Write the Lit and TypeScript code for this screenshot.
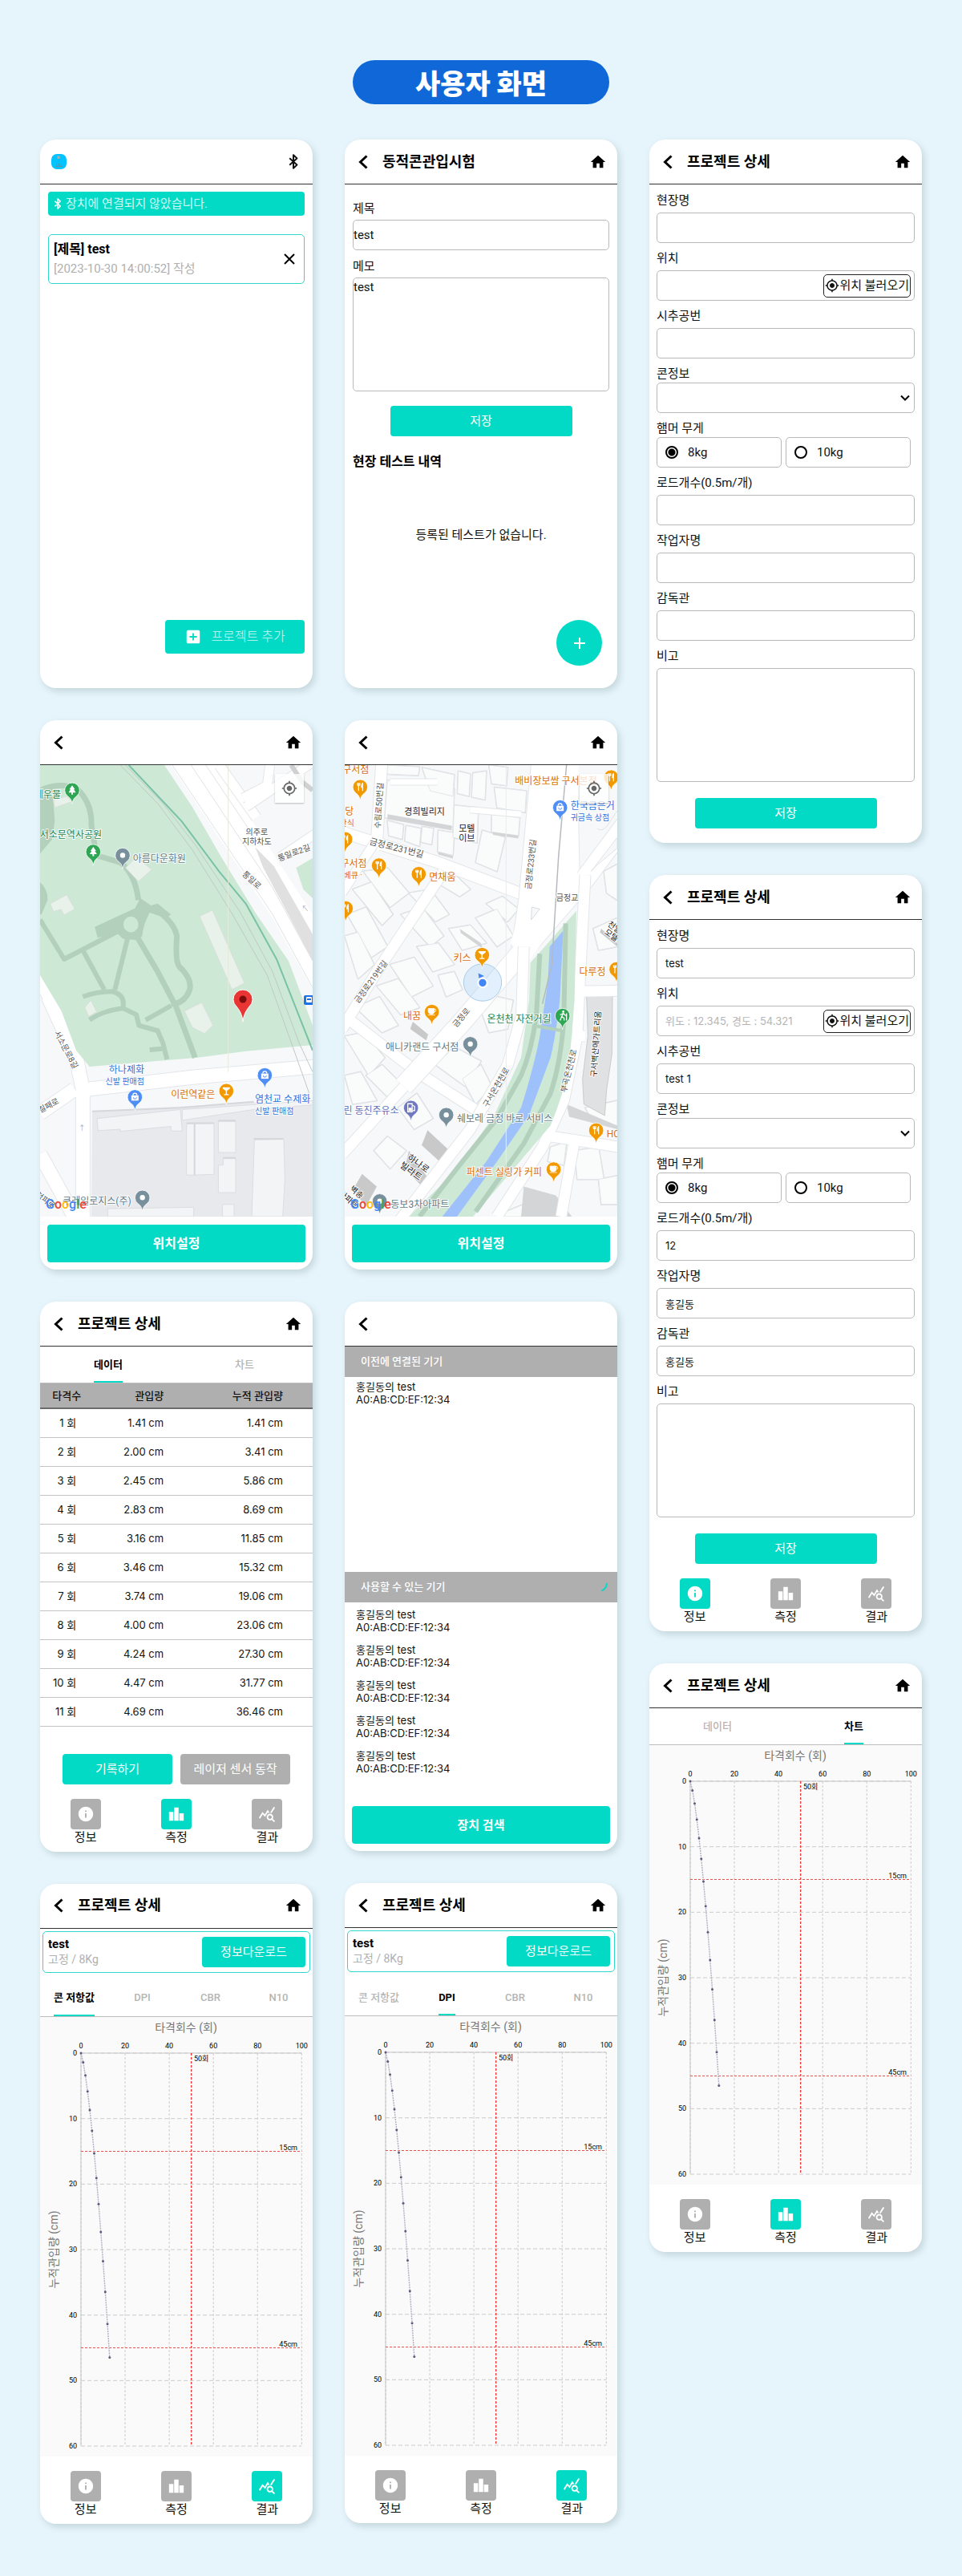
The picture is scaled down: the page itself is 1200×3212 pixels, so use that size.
import { LitElement, html, svg, css, nothing } from "lit";
import { customElement, property } from "lit/decorators.js";
import { classMap } from "lit/directives/class-map.js";

/* ---------- shared styles ---------- */

const base = css`
  :host {
    display: block;
    box-sizing: border-box;
    font-family: Roboto, "Noto Sans CJK KR", sans-serif;
    color: #111;
    font-size: 15px;
    line-height: 20px;
  }
  * { box-sizing: border-box; }
  button, input, textarea, select {
    font: inherit;
    color: inherit;
    margin: 0;
    padding: 0;
    border: 0;
    background: none;
    outline: none;
    border-radius: 0;
  }
  button { cursor: pointer; }
  svg { display: block; }
  .teal-button {
    display: flex;
    align-items: center;
    justify-content: center;
    background: #03dac6;
    color: #fff;
    border-radius: 4px;
    height: 38px;
  }
  .save { width: 227px; align-self: center; }
  .label { display: block; height: 20px; }
  .box {
    display: block;
    width: 100%;
    height: 38px;
    border: 1px solid #b9b9b9;
    border-radius: 5px;
    background: #fff;
  }
  textarea.box { height: 142px; resize: none; }
`;

/* ---------- icons ---------- */

const icon = (d: string, size: number) => html`<svg width=${size} height=${size} viewBox="0 0 24 24" fill="currentColor" aria-hidden="true"><path d=${d} /></svg>`;
const HOME = "M10 20v-6h4v6h5v-8h3L12 3 2 12h3v8z";
const LOCATE = "M12 8c-2.21 0-4 1.79-4 4s1.79 4 4 4 4-1.79 4-4-1.79-4-4-4zm8.94 3c-.46-4.17-3.77-7.48-7.94-7.94V1h-2v2.06C6.83 3.52 3.52 6.83 3.06 11H1v2h2.06c.46 4.17 3.77 7.48 7.94 7.94V23h2v-2.06c4.17-.46 7.48-3.77 7.94-7.94H23v-2h-2.06zM12 19c-3.87 0-7-3.13-7-7s3.13-7 7-7 7 3.13 7 7-3.13 7-7 7z";
const INFO = "M12 2C6.48 2 2 6.48 2 12s4.48 10 10 10 10-4.48 10-10S17.52 2 12 2zm1 15h-2v-6h2v6zm0-8h-2V7h2v2z";
const BARS = "M2 9h6v12H2zM9 3h6v18H9zM16 11h6v10h-6z";
const STATS = "M19.88 18.47c.44-.7.7-1.51.7-2.39 0-2.49-2.01-4.5-4.5-4.5s-4.5 2.01-4.5 4.5 2.01 4.5 4.49 4.5c.88 0 1.7-.26 2.39-.7L21.58 23 23 21.58l-3.12-3.11zm-3.8.11c-1.38 0-2.5-1.12-2.5-2.5s1.12-2.5 2.5-2.5 2.5 1.12 2.5 2.5-1.12 2.5-2.5 2.5zm-.36-8.5c-.74.02-1.45.18-2.1.45l-.55-.83-3.8 6.18-3.01-3.52-3.63 5.81L1 17l5-8 3 3.5L13 6c.97 1.6 1.81 2.72 2.72 4.08zm2.59.5c-.64-.28-1.33-.45-2.05-.49L21.38 2 23 3.18l-4.69 7.4z";
const ADD_BOX = "M19 3H5a2 2 0 0 0-2 2v14a2 2 0 0 0 2 2h14a2 2 0 0 0 2-2V5a2 2 0 0 0-2-2zm-2 10h-4v4h-2v-4H7v-2h4V7h2v4h4v2z";

const bluetooth = (w: number, h: number) => html`<svg width=${w} height=${h} viewBox="0 0 12 19" fill="none" stroke="currentColor" stroke-width="2" stroke-linejoin="round" aria-hidden="true">
  <path d="M1.2 5.2 10.4 13.6 6 17.8V1.2l4.4 4.2L1.2 13.8" />
</svg>`;

/* ---------- screen header ---------- */

@customElement("screen-header")
export class ScreenHeader extends LitElement {
  @property() heading = "";
  @property() end: "home" | "none" = "home";
  static styles = [base, css`
    .bar {
      display: flex;
      align-items: center;
      height: 56px;
      padding: 0 13px 0 11px;
      border-bottom: 1px solid #333;
    }
    h2 { margin: 0; padding-left: 12px; font-size: 18px; line-height: 24px; font-weight: 700; flex: 1; color: #000; }
    button { color: #000; }
  `];
  render() {
    return html`<header class="bar">
      <button aria-label="뒤로">
        <svg width="24" height="24" viewBox="0 0 24 24" fill="none" stroke="currentColor" stroke-width="3" aria-hidden="true"><path d="M16.5 4.5 8.5 12l8 7.5" /></svg>
      </button>
      <h2>${this.heading}</h2>
      ${this.end === "home" ? html`<button aria-label="홈">${icon(HOME, 22)}</button>` : nothing}
    </header>`;
  }
}

/* ---------- bottom navigation ---------- */

@customElement("bottom-nav")
export class BottomNav extends LitElement {
  @property({ type: Number }) active = 0;
  static styles = [base, css`
    nav { display: grid; grid-template-columns: repeat(3, 1fr); padding: 18px 0 7px; }
    a { display: flex; flex-direction: column; align-items: center; color: #111; text-decoration: none; line-height: 21px; }
    .tile { display: flex; align-items: center; justify-content: center; width: 38px; height: 38px; border-radius: 4px; background: #afafaf; color: #fff; }
    .on { background: #03dac6; }
  `];
  render() {
    const items: [string, string, number][] = [["정보", INFO, 22], ["측정", BARS, 22], ["결과", STATS, 22]];
    return html`<nav>${items.map(([name, d, size], i) => html`<a href="#">
      <span class=${classMap({ tile: true, on: i === this.active })}>${icon(d, size)}</span>${name}
    </a>`)}</nav>`;
  }
}

/* ---------- tabs ---------- */

@customElement("tab-row")
export class TabRow extends LitElement {
  @property({ attribute: false }) tabs: string[] = [];
  @property({ type: Number }) active = 0;
  static styles = [base, css`
    .row { display: flex; height: 46px; border-bottom: 1px solid #bdbdbd; }
    .cell { flex: 1; display: flex; justify-content: center; }
    button { font-size: 13px; font-weight: 500; color: #b5b5b5; border-bottom: 2px solid transparent; border-top: 2px solid transparent; }
    .on { color: #000; font-weight: 700; border-bottom-color: #03dac6; }
  `];
  render() {
    return html`<div class="row" role="tablist">${this.tabs.map((t, i) => html`<div class="cell">
      <button role="tab" aria-selected=${i === this.active} class=${classMap({ on: i === this.active })}>${t}</button>
    </div>`)}</div>`;
  }
}

/* ---------- penetration chart ---------- */

const DEPTHS = [0, 1.41, 3.41, 5.86, 8.69, 11.85, 15.32, 19.06, 23.06, 27.3, 31.77, 36.46, 41.36, 46.46];

@customElement("depth-chart")
export class DepthChart extends LitElement {
  static styles = [base, css`
    svg { width: 100%; height: auto; background: #fafafa; }
    .tick { font-size: 9px; fill: #000; }
    .axis { font-size: 14px; fill: #777; }
  `];
  render() {
    const X = (v: number) => 51 + v * 2.753;
    const Y = (v: number) => 45 + v * 8.167;
    const xs = [0, 20, 40, 60, 80, 100];
    const ys = [0, 10, 20, 30, 40, 50, 60];
    return html`<svg viewBox="0 0 340 548" role="img" aria-label="타격회수와 누적관입량">
      <text class="axis" x="182" y="18" text-anchor="middle">타격회수 (회)</text>
      <text class="axis" transform="translate(22 290) rotate(-90)" text-anchor="middle">누적관입량 (cm)</text>
      ${xs.map((v) => svg`<line x1=${X(v)} x2=${X(v)} y1=${Y(0)} y2=${Y(60)} stroke="#ccc" stroke-dasharray="3 2" />
        <text class="tick" x=${X(v)} y="39" text-anchor="middle">${v}</text>`)}
      ${ys.map((v) => svg`<line x1=${X(0)} x2=${X(100)} y1=${Y(v)} y2=${Y(v)} stroke="#ccc" stroke-dasharray="5 3" />
        <text class="tick" x="46" y=${Y(v) + 3} text-anchor="end">${v}</text>`)}
      <path d="M${X(0)} ${Y(60)}V${Y(0)}H${X(100)}" fill="none" stroke="#c8c8c8" />
      <line x1=${X(50)} x2=${X(50)} y1=${Y(0)} y2=${Y(60)} stroke="#f03c3c" stroke-width="1.4" stroke-dasharray="3 2" />
      <text class="tick" x="192" y="55">50회</text>
      ${[15, 45].map((v) => svg`<line x1=${X(0)} x2=${X(100)} y1=${Y(v)} y2=${Y(v)} stroke="#e85050" stroke-dasharray="3 2" />
        <text class="tick" x="321" y=${Y(v) - 2} text-anchor="end">${v}cm</text>`)}
      <polyline points=${DEPTHS.map((d, i) => `${X(i)},${Y(d)}`).join(" ")} fill="none" stroke="#b4afc4" stroke-width="1.4" stroke-dasharray="2 1" />
      ${DEPTHS.map((d, i) => svg`<circle cx=${X(i)} cy=${Y(d)} r="1.5" fill="#5f5a7d" />`)}
    </svg>`;
  }
}

/* ---------- project form ---------- */

interface FormValues { site: string; location: string; hole: string; rods: string; worker: string; supervisor: string; }

@customElement("project-form")
export class ProjectForm extends LitElement {
  @property({ attribute: false }) values: FormValues = { site: "", location: "", hole: "", rods: "", worker: "", supervisor: "" };
  static styles = [base, css`
    form { display: flex; flex-direction: column; gap: 9px; padding: 10px 9px 0; }
    .field { display: flex; flex-direction: column; gap: 5px; }
    .tight { gap: 1px; }
    input.box, .place input { padding: 0 10px; font-family: Inter, "Noto Sans CJK KR", sans-serif; font-size: 13px; }
    .place { display: flex; align-items: center; padding-right: 4px; }
    .place input { flex: 1; min-width: 0; }
    .place input::placeholder { color: #b5b5b5; opacity: 1; }
    .locate { display: flex; align-items: center; height: 29px; padding: 0 1px; border: 1px solid #222; border-radius: 5px; white-space: nowrap; line-height: 20px; }
    .select { display: flex; align-items: center; padding-right: 4px; }
    .select select { appearance: none; flex: 1; height: 100%; padding: 0 10px; }
    .select svg { pointer-events: none; }
    fieldset { border: 0; margin: 0; padding: 0; min-width: 0; }
    legend { padding: 0; margin-bottom: 1px; }
    .radios { display: grid; grid-template-columns: 1fr 1fr; gap: 5px; margin-right: 5px; }
    .radio { display: flex; align-items: center; gap: 12px; padding-left: 10px; }
    .radio input { appearance: none; width: 16px; height: 16px; border: 2px solid #000; border-radius: 50%; }
    .radio input:checked { background: radial-gradient(circle, #000 4px, transparent 5px); }
    .save { margin-top: 11px; }
  `];
  private text(id: string, label: string, value: string) {
    return html`<div class="field"><label class="label" for=${id}>${label}</label><input class="box" id=${id} .value=${value} /></div>`;
  }
  render() {
    const v = this.values;
    return html`<form @submit=${(e: Event) => e.preventDefault()}>
      ${this.text("site", "현장명", v.site)}
      <div class="field">
        <label class="label" for="location">위치</label>
        <div class="box place">
          <input id="location" placeholder=${v.location} />
          <button type="button" class="locate">${icon(LOCATE, 18)}위치 불러오기</button>
        </div>
      </div>
      ${this.text("hole", "시추공번", v.hole)}
      <div class="field tight">
        <label class="label" for="cone">콘정보</label>
        <div class="box select">
          <select id="cone"><option value=""></option></select>
          <svg width="14" height="14" viewBox="0 0 14 14" fill="none" stroke="#000" stroke-width="2" aria-hidden="true"><path d="m2 4.5 5 5 5-5" /></svg>
        </div>
      </div>
      <fieldset>
        <legend class="label">햄머 무게</legend>
        <div class="radios">
          <label class="box radio"><input type="radio" name="hammer" .checked=${true} />8kg</label>
          <label class="box radio"><input type="radio" name="hammer" />10kg</label>
        </div>
      </fieldset>
      ${this.text("rods", "로드개수(0.5m/개)", v.rods)}
      ${this.text("worker", "작업자명", v.worker)}
      ${this.text("supervisor", "감독관", v.supervisor)}
      <div class="field"><label class="label" for="note">비고</label><textarea class="box" id="note"></textarea></div>
      <button class="teal-button save">저장</button>
    </form>`;
  }
}

/* ---------- maps ---------- */

type Label = [x: number, y: number, text: string, color?: string, size?: number, anchor?: string, angle?: number];
type Pin = [x: number, y: number, color: string, kind: string];

const GREEN = "#25844a", ORANGE = "#d9700b", BLUE = "#2f74dc", SLATE = "#647c8a", INK = "#555";

// Survey coordinates of the map artwork to drawing pixels.
const mx = (x: number) => (x - 30) / 3;
const my = (y: number) => (y - 143) / 2.24;

const drawLabel = ([x, y, text, color = INK, size = 12, anchor = "start", angle = 0]: Label) => svg`
  <text transform=${`translate(${mx(x)} ${my(y)}) rotate(${angle})`} fill=${color} font-size=${size} text-anchor=${anchor} dominant-baseline="central">${text}</text>`;

const glyphs: Record<string, unknown> = {
  dot: svg`<circle r="3.2" fill="#fff" />`,
  tree: svg`<path d="M0-6 3.5-1H2L4.5 3H1v2.500H-1V3H-4.500L-2-1H-3.500z" fill="#fff" />`,
  bag: svg`<path d="M-4.500-2H4.500V4.500H-4.500z" fill="#fff" /><path d="M-2.500-2a2.500 2.800 0 0 1 5 0" fill="none" stroke="#fff" stroke-width="1.300" /><path d="M-2 .5a2 2 0 0 0 4 0" fill="none" stroke="#4f8ff5" />`,
  glass: svg`<path d="M-4.500-4.500H4.500V-3L.7 0V4H3v1.200H-3V4H-.7V0L-4.500-3z" fill="#fff" />`,
  fork: svg`<path d="M-3.500-5v3M-2-5v3M-.5-5v3M-3.500-2h3M-2-2v7M3 5V-4.500q-1.500 1-1.500 5H3" fill="none" stroke="#fff" stroke-width="1.200" />`,
  cup: svg`<path d="M-4.500-4H3V0q0 3-3.500 3T-4.500 0zM-5 4H4" fill="#fff" stroke="#fff" stroke-width=".8" /><circle cx="3.500" cy="-1.800" r="1.600" fill="none" stroke="#fff" />`,
  gas: svg`<path d="M-4-5H1.500V5H-4zM2.500-3l2 1.500V3.500H2.500" fill="none" stroke="#fff" stroke-width="1.300" /><path d="M-3 0h4v4h-4z" fill="#fff" />`,
  walk: svg`<circle cx="1" cy="-5" r="1.400" fill="#fff" /><path d="M1-3-1 1 2 3V6M-1 1-3 6M1-3 4 0M1-3-3-1M5-3V6" fill="none" stroke="#fff" stroke-width="1.300" />`,
};

const drawPin = ([x, y, color, kind]: Pin) => svg`<g transform=${`translate(${mx(x)} ${my(y)})`}>
  <path d="M0 17C-1 12-2 10-6 7.200A9.300 9.300 0 1 1 6 7.200C2 10 1 12 0 17z" fill=${color} stroke="#fff" stroke-width=".8" />${glyphs[kind]}</g>`;

const googleMark = svg`<text x="7" y="553" font-size="16" font-weight="500" font-family="Roboto, sans-serif"><tspan fill="#4285f4">G</tspan><tspan fill="#ea4335">o</tspan><tspan fill="#fbbc05">o</tspan><tspan fill="#4285f4">g</tspan><tspan fill="#34a853">l</tspan><tspan fill="#ea4335">e</tspan></text>`;

const p = (d: string, fill: string, stroke = "none", w = 1) => svg`<path d=${d} fill=${fill} stroke=${stroke} stroke-width=${w} />`;
const l = (d: string, stroke: string, w = 1) => p(d, "none", stroke, w);
const road = (d: string, w: number) => [l(d, "#e3e6e9", w + 2), l(d, "#fff", w)];

function parkMap() {
  const path = "#b3d0bd";
  return svg`
    ${p("M30 143H1050V1404H30z", "#f7f8fa")}
    ${road("M30 1230 170 1420M30 1115 160 1048M60 790 165 960 190 1050V1420M190 1050 600 1015 1060 985M0 690 110 860", 17)}
    ${p("M520 143H690L850 330 1050 560V770L900 570z", "#fff")}
    ${road("M700 143 840 290", 12)}
    ${road("M800 260 1060 130M930 400 1060 335M790 235 880 200 890 143", 11)}
    ${l("M525 143 900 560 1050 765M595 143 900 485 1050 690M650 143 850 365", "#dfe2e5")}
    ${p("M30 143H495L600 260 700 390 840 560 960 690 1050 870V925L800 942 620 960 215 985 165 940 110 830 30 730z", "#cee8d6")}
    ${p("M988 430 1050 403V515L1015 490z", "#cee8d6")}
    ${p("M835 372 905 425 1050 615V690L930 520 865 430z", "#e0e0e0")}
    ${l("M970 143 1010 190 1050 213", "#d0d0d0", 6)}
    ${p("M30 205 75 200 85 300 75 350 30 390z", path)}
    ${l("M40 210Q110 190 170 210 225 250 222 310L240 395 330 415Q385 445 398 520", path, 7)}
    ${p("M30 470Q60 490 58 520L35 560H30z", path)}
    ${l("M30 575 120 685 340 600M190 660 270 770M358 625 310 770", path, 6)}
    ${p("M235 595 385 543 405 515 445 535 470 530 520 560 500 570 440 555Q415 590 412 620L395 632 340 628 318 612 245 625z", path)}
    ${p("M342 588a28 22 0 1 0 56 0a28 22 0 1 0-56 0z", "#cee8d6")}
    ${l("M460 545Q530 580 542 620 535 690 550 705 600 740 590 770 570 810 520 810M395 625 470 720 540 820 610 960", path, 7)}
    ${l("M190 790Q240 775 300 775 350 785 340 820M215 855Q260 830 340 822L390 840 400 870 470 885 490 920 505 965M425 855 520 815M440 938 490 935", path, 6)}
    ${p("M68 530 130 505 160 545 120 562 108 546 80 552z M350 430 390 400 448 435 398 468z M627 565 675 548 795 752 748 770z M570 830 635 806 677 870 645 893 600 876z M197 820 220 800 242 832 212 845z M80 240 130 230 150 245 85 262z", "#e8f1ea", "#d6e0d8")}
    ${l("M330 143 470 250 600 380 750 560 880 730 990 960 1037 1060M350 143 490 250 610 365 780 555 900 720 1000 920 1050 1000", "#bfc9c5", 1)}
    ${l("M362 143 560 300 700 440 800 530 915 685 1050 940", "#79c2a5", 2)}
    ${p("M225 1110 830 1085 1050 1092V1404H222z", "#e8e9ed")}
    ${p("M243 1130 555 1105 562 1165H520V1152L330 1166V1160L247 1164z M562 1105 1050 1080V1092L830 1105 562 1135z M578 1145 681 1143V1286L610 1288H578z M697 1138H762V1225H697z M697 1260H715V1242H762V1337H697z M832 1190 942 1188 946 1300 938 1404H822z M283 1382 605 1378V1404H283z M712 1370H756V1404H712z", "#f3f4f6", "#dcdde0")}
    ${l("M225 1110 555 1100 830 1083M578 1143H681M697 1136H762M715 1240H762M830 1187H940M608 1145V1288", "#d5d7da", 2)}
    ${l("M734 143V1000", "#e6eada")}`;
}

const PARK_LABELS: Label[] = [
  [108, 225, "네우물", GREEN, 12, "end"], [261, 338, "서소문역사공원", GREEN, 12, "end"], [377, 406, "아름다운화원", SLATE],
  [841, 330, "의주로", INK, 10, "middle"], [841, 356, "지하차도", INK, 10, "middle"], [980, 388, "통일로2길", INK, 10, "middle", -20],
  [822, 464, "통일로", INK, 10, "middle", 42], [128, 938, "서소문로8길", INK, 10, "middle", 62], [62, 1094, "칠패로", INK, 10, "middle", -28],
  [420, 994, "하나제화", BLUE, 12, "end"], [420, 1026, "신발 판매점", BLUE, 10, "end"], [685, 1063, "이런역같은", ORANGE, 12, "end"],
  [834, 1078, "염천교 수제화", BLUE], [834, 1110, "신발 판매점", BLUE, 10], [371, 1362, "쿠레일로지스(주)", SLATE, 12, "end"], [50, 1358, "청파로", INK, 10, "middle", 36],
  [187, 1158, "↑", "#a9b0bd", 9, "middle"], [1022, 545, "↖", "#a9b0bd", 9, "middle"],
];
const PARK_PINS: Pin[] = [
  [150, 213, "#2fa653", "tree"], [229, 385, "#2fa653", "tree"], [339, 395, "#788f9c", "dot"], [385, 1070, "#4f8ff5", "bag"],
  [871, 1009, "#4f8ff5", "bag"], [727, 1053, "#f29900", "glass"], [413, 1351, "#788f9c", "dot"],
];

const blocks = [
  "M185 143 310 148 305 172 190 168z", "M190 185 380 195 440 210 435 315 180 290z", "M320 150 440 170 435 230 350 215z", "M455 160 500 168 495 230 452 222z",
  "M510 165 560 160 555 240 505 232z", "M570 143 640 150 635 200 580 195z", "M590 205 710 215 705 275 600 262z", "M190 298 250 310 245 350 195 340z",
  "M260 312 315 320 310 370 255 355z", "M320 315 362 320 355 365 315 358z", "M380 325 440 332 435 395 378 385z", "M440 255 530 262 525 360 435 345z",
  "M545 325 630 345 600 440 520 415z", "M580 280 685 290 680 340 580 330z", "M100 440 190 430 270 500 200 540z", "M60 490 130 470 210 560 170 590z",
  "M40 560 110 540 190 650 130 680z", "M270 500 350 490 420 560 370 580z", "M240 560 320 540 400 620 350 650z", "M350 460 430 440 500 490 460 510z",
  "M560 530 620 510 680 545 640 580z", "M520 570 600 545 660 620 600 650z", "M420 600 500 590 560 640 470 660z", "M300 650 380 640 440 700 360 720z",
  "M200 700 290 680 360 760 280 790z", "M150 760 230 740 310 820 240 840z", "M70 820 160 790 230 870 170 890z", "M380 730 440 720 470 770 410 790z",
  "M540 830 600 790 660 800 640 880 570 890z", "M370 980 440 930 540 970 480 1040z", "M470 1020 540 980 580 1040 520 1090z", "M30 900 100 890 180 960 120 1010z",
  "M110 1010 170 980 250 1040 190 1070z", "M30 1010 90 1000 150 1080 60 1090z", "M230 1100 300 1060 360 1130 290 1160z", "M140 1220 190 1180 260 1220 200 1270z",
  "M30 620 80 610 140 700 80 740z", "M1000 440 1050 420V520L1010 500z", "M960 600 1050 570V650L980 660z", "M930 1100 1050 1080V1150L960 1140z",
  "M800 1210 860 1195 850 1260 790 1250z", "M890 1220 980 1210 1000 1300 900 1300z", "M980 1300 1050 1290V1370L990 1370z", "M600 1400 700 1370 760 1404H600z",
];

function riverMap() {
  const bank = "#b3d0bd";
  return svg`
    ${p("M30 143H1050V1404H30z", "#f7f8fa")}
    ${blocks.map((d) => l(d, "#d8dbde", 2))}
    ${blocks.map((d) => p(d, "#fafbfb", "#e3e6e8"))}
    ${p("M190 280 430 312V325L190 294z M460 600 540 640 545 655 465 612z M380 385 435 397V404L380 393z M585 330 680 340V348L585 338z M860 1090 1050 1150V1160L870 1125z M700 1320 820 1345 880 1404H690z", "#d3d5d7")}
    ${p("M340 1163 415 1215 400 1260 318 1205z M270 1220 345 1300 330 1328 255 1270z M95 1285 150 1320 110 1375 60 1330z M285 860 342 895 335 912 275 880z M990 600 1050 640V650L985 610z", "#c9c9c9")}
    ${p("M935 785 1032 787 1030 950 1010 1050 1003 1122 925 1090 920 1020 940 900z", "#e0e1e2", "#c9cbcd")}
    ${road("M500 268 690 280M200 190H375", 7)}
    ${road("M170 120 148 380M20 330 380 415 700 505 820 540", 14)}
    ${road("M400 440 150 720 20 880M40 850 300 1000 560 1125M20 1230 290 1010", 13)}
    ${road("M150 350 20 500", 11)}
    ${road("M760 130 712 520 680 680", 20)}
    ${road("M860 130 870 480 790 560", 26)}
    ${road("M250 1040 470 860 720 640 930 460 1080 310", 24)}
    ${p("M740 143H905L900 500 720 690 650 640 705 500z", "#fff")}
    ${road("M930 450 908 770 900 900 850 1080 770 1210 600 1404M900 775 1060 773M900 900H930M800 1180 1060 1210M890 1190 840 1404", 13)}
    ${road("M700 650 692 840 640 980 500 1160 230 1420", 13)}
    ${p("M730 540 760 545 728 575z", "#f7f8fa", "#d8dcdf")}
    ${p("M897 550 890 800 870 980Q850 1060 800 1150L640 1290 510 1404H270L440 1280 590 1120 690 960 720 800 725 695z", "#cee8d6")}
    ${l("M760 670 748 830Q735 930 690 1010L600 1130 460 1260 310 1404M857 585 850 850Q840 970 800 1060L700 1200 520 1390", bank, 6)}
    ${p("M848 605 835 800Q820 900 800 960L720 1120 600 1250 450 1404H395L560 1250 690 1100Q740 980 760 900L790 750 797 650z", "#9fc1fb")}
    ${l("M750 872 845 885", bank, 4)}
    ${l("M860 143 830 400 805 700 770 810", "#b5babf", 1.5)}
    ${l("M634 143V1300", "#e9ecef")}
    ${p("M952 440 1050 345V375L970 425z M975 320Q990 330 1010 315L1050 270", "#f7f8fa", "#dfe2e5")}
    ${p("M475 750a71 52 0 1 0 142 0a71 52 0 1 0-142 0z", "rgba(120,185,240,.22)", "#a9cdee")}
    ${p("M530 724 552 732 532 738z", "#4285f4")}
    ${p("M529 751a17 13 0 1 0 34 0a17 13 0 1 0-34 0z", "#4285f4", "#fff", 2)}`;
}

const RIVER_LABELS: Label[] = [
  [121, 157, "구서점", ORANGE, 12, "end"], [64, 274, "당", ORANGE, 12, "end"], [66, 306, "한식", ORANGE, 10, "end"],
  [113, 419, "구서점", ORANGE, 12, "end"], [96, 451, "베큐 ·", ORANGE, 10, "end"], [346, 457, "면채움", ORANGE],
  [667, 187, "배비장보쌈 구서본점", ORANGE, 12], [875, 257, "한국금은거", BLUE], [875, 290, "귀금속 상점", BLUE, 10],
  [329, 274, "경희빌리지", "#222", 11, "middle"], [487, 320, "모텔", "#222", 11, "middle"], [487, 349, "이브", "#222", 11, "middle"],
  [158, 256, "수림로50번길", INK, 10, "middle", -86], [224, 375, "금정로231번길", INK, 11, "middle", 14], [726, 420, "금정로233번길", INK, 10, "middle", -84],
  [863, 514, "금정교", INK, 10, "middle"], [503, 682, "키스", ORANGE, 12, "end"], [128, 748, "금정로219번길", INK, 10, "middle", -54],
  [315, 843, "내꿈", ORANGE, 12, "end"], [466, 848, "금정로", INK, 10, "middle", -50], [803, 853, "온천천 자전거길", GREEN, 12, "end"],
  [1007, 721, "다루정", ORANGE, 12, "end"], [457, 932, "애니카랜드 구서점", SLATE, 12, "end"], [597, 1043, "구서온천천로", INK, 10, "middle", -60],
  [868, 997, "부곡온천천로", INK, 10, "middle", -76], [970, 922, "구서벽산메가트리움", "#222", 10, "middle", -86], [233, 1109, "린 동진주유소", "#6470b8", 12, "end"],
  [450, 1130, "쉐보레 금정 바로 서비스", SLATE], [1010, 1173, "HO", ORANGE], [305, 1256, "하나로", "#222", 11, "middle", 36],
  [278, 1278, "빌라트", "#222", 11, "middle", 36], [768, 1282, "퍼센트 실링가 커피", ORANGE, 12, "end"], [75, 1336, "벽송", "#222", 10, "middle", 40],
  [45, 1356, "아파트", "#222", 10, "middle", 40], [202, 1371, "동보3차아파트", SLATE], [1040, 596, "천일", "#222", 10, "middle", 36], [1028, 618, "모텔", "#222", 10, "middle", 36],
];
const RIVER_PINS: Pin[] = [
  [88, 204, "#f29900", "fork"], [32, 350, "#f29900", "fork"], [158, 423, "#f29900", "fork"], [307, 447, "#f29900", "fork"], [34, 543, "#f29900", "fork"],
  [1027, 177, "#f29900", "fork"], [836, 261, "#4f8ff5", "bag"], [544, 673, "#f29900", "glass"], [1047, 713, "#f29900", "fork"], [356, 832, "#f29900", "cup"],
  [845, 843, "#2fa653", "walk"], [500, 922, "#788f9c", "dot"], [278, 1100, "#7078c0", "gas"], [410, 1120, "#788f9c", "dot"], [971, 1163, "#f29900", "fork"],
  [812, 1272, "#f29900", "cup"], [161, 1361, "#788f9c", "dot"],
];

@customElement("map-view")
export class MapView extends LitElement {
  @property() place: "park" | "river" = "park";
  static styles = [base, css`
    .frame { position: relative; overflow: hidden; }
    .map { width: 100%; height: 563px; }
    .art path { vector-effect: non-scaling-stroke; }
    .names text { paint-order: stroke; stroke: rgba(255, 255, 255, 0.85); stroke-width: 2px; font-weight: 400; }
    .locate { position: absolute; top: 11px; right: 11px; width: 36px; height: 36px; display: flex; align-items: center; justify-content: center; background: rgba(255, 255, 255, 0.78); color: #666; box-shadow: 0 1px 2px rgba(0, 0, 0, 0.25); }
  `];
  render() {
    const park = this.place === "park";
    return html`<div class="frame">
      <svg class="map" viewBox="0 0 340 563" preserveAspectRatio="xMidYMid slice" role="img" aria-label="지도">
        <g class="art" transform="matrix(.33333 0 0 .44643 -10 -63.84)" stroke-linejoin="round">${park ? parkMap() : riverMap()}</g>
        <g>${(park ? PARK_PINS : RIVER_PINS).map(drawPin)}</g>
        <g class="names">${(park ? PARK_LABELS : RIVER_LABELS).map(drawLabel)}</g>
        <g>${googleMark}</g>
        ${park ? svg`<path d="M253 320C252 311 249 306 245 301A12 12 0 1 1 261 301C257 306 254 311 253 320z" fill="#ea3535" stroke="#fff" /><circle cx="253" cy="292" r="4.500" fill="#7d0d0d" />
          <rect x="329" y="287" width="14" height="12" rx="2" fill="#1a73e8" /><rect x="332" y="289" width="7" height="7" rx="1" fill="#fff" /><path d="M333 291h5v2h-5z" fill="#1a73e8" />` : nothing}
      </svg>
      <button class="locate" aria-label="현재 위치">${icon(LOCATE, 20)}</button>
    </div>`;
  }
}

/* ---------- page ---------- */

const ROWS = ["1.41", "2.00", "2.45", "2.83", "3.16", "3.46", "3.74", "4.00", "4.24", "4.47", "4.69"]
  .map((step, i) => [`${i + 1} 회`, `${step} cm`, `${DEPTHS[i + 1].toFixed(2)} cm`]);

const FILLED: FormValues = { site: "test", location: "위도 : 12.345, 경도 : 54.321", hole: "test 1", rods: "12", worker: "홍길동", supervisor: "홍길동" };

@customElement("app-root")
export class AppRoot extends LitElement {
  static styles = [base, css`
    :host { background: #e6f5fb; padding: 75px 50px 66px; }
    h1 {
      width: 320px; max-width: 100%; height: 55px; margin: 0 auto 44px; border-radius: 28px; background: #1068d8; color: #fff;
      display: flex; align-items: center; justify-content: center; font-size: 34px; line-height: 40px; font-weight: 900;
      font-family: "Noto Sans CJK KR", sans-serif;
    }
    .columns { display: grid; grid-template-columns: repeat(3, minmax(0, 1fr)); gap: 40px; align-items: start; }
    .column { display: flex; flex-direction: column; gap: 40px; }
    .card { display: flex; flex-direction: column; background: #fff; border-radius: 20px; overflow: hidden; box-shadow: 3px 4px 8px rgba(60, 90, 100, 0.2); }

    .home-bar { display: flex; align-items: center; justify-content: space-between; height: 56px; padding: 0 18px 0 14px; border-bottom: 1px solid #333; }
    .logo { width: 19px; height: 19px; }
    .projects { display: flex; flex-direction: column; padding: 9px 10px 43px; }
    .banner { display: flex; align-items: center; gap: 5px; height: 30px; padding: 0 7px; border-radius: 4px; background: #03dac6; color: #fff; }
    .banner span { opacity: 0.8; }
    .list { margin: 23px 0 0; padding: 0; list-style: none; min-height: 481px; }
    .project { display: flex; align-items: center; justify-content: space-between; height: 62px; padding: 0 11px 0 6px; border: 1px solid #2fd8ca; border-radius: 5px; }
    .project h3 { margin: 0; font-size: 16px; line-height: 24px; color: #000; }
    .project p { margin: 0; line-height: 24px; color: #b0b0b0; }
    .add { width: 174px; height: 42px; gap: 11px; align-self: flex-end; font-size: 16px; }
    .add span { opacity: 0.8; font-weight: 300; }

    .test { display: flex; flex-direction: column; padding: 20px 10px 28px; }
    .test .label { margin-bottom: 4px; }
    .test textarea { padding: 1px 0; margin-bottom: 18px; }
    .test input { margin-bottom: 10px; }
    .test h3 { margin: 22px 0 71px; font-size: 16px; line-height: 20px; color: #000; }
    .test p { margin: 0 0 96px; text-align: center; }
    .fab { display: flex; align-items: center; justify-content: center; width: 57px; height: 57px; margin-right: 9px; border-radius: 50%; background: #03dac6; align-self: flex-end; }

    .wide { margin: 10px 9px 9px; height: 47px; font-weight: 700; font-size: 16px; }
    .form { padding-bottom: 18px; }
    .form.with-nav { padding-bottom: 0; }

    table { width: 100%; border-collapse: collapse; table-layout: fixed; font-family: Inter, "Noto Sans CJK KR", sans-serif; font-size: 13px; line-height: 18px; }
    th, td { text-align: right; padding: 0; }
    th { height: 31px; background: #afafaf; font-weight: 500; border-bottom: 2px solid #6b6b6b; }
    td { height: 36px; border-bottom: 1px solid #c4c4c4; }
    .c1 { width: 18%; }
    .c2 { width: 35%; }
    th:nth-child(1) { padding-right: 10px; }
    td:nth-child(1) { padding-right: 16px; }
    th:nth-child(2), td:nth-child(2) { padding-right: 26px; }
    th:nth-child(3), td:nth-child(3) { padding-right: 37px; }
    .actions { display: grid; grid-template-columns: 1fr 1fr; gap: 10px; padding: 34px 28px 0; }
    .gray { background: #afafaf; }

    .band { display: flex; align-items: center; justify-content: space-between; margin: 0; height: 38px; padding: 0 12px 0 20px; background: #afafaf; color: #fff; font-size: 13px; font-weight: 500; }
    .devices { margin: 0; padding: 4px 14px 0; list-style: none; display: flex; flex-direction: column; gap: 11px; font-family: Inter, "Noto Sans CJK KR", sans-serif; font-size: 13px; line-height: 16px; }
    .known { min-height: 243px; }
    .found { min-height: 244px; padding-top: 7px; gap: 12px; }
    .scan { font-size: 15px; }

    .info { display: flex; align-items: center; justify-content: space-between; height: 52px; margin: 3px 3px 9px; padding: 0 5px 0 6px; border: 1px solid #2fd8ca; border-radius: 5px; }
    .info h3 { margin: 0; font-size: 15px; line-height: 19px; color: #000; }
    .info p { margin: 0; font-size: 14px; line-height: 19px; color: #b0b0b0; }
    .info .teal-button { width: 129px; }
  `];

  private mapCard(place: string) {
    return html`<section class="card">
      <screen-header></screen-header>
      <map-view place=${place}></map-view>
      <button class="teal-button wide">위치설정</button>
    </section>`;
  }

  private resultCard(active: number) {
    return html`<section class="card">
      <screen-header heading="프로젝트 상세"></screen-header>
      <div class="info">
        <div><h3>test</h3><p>고정 / 8Kg</p></div>
        <button class="teal-button">정보다운로드</button>
      </div>
      <tab-row .tabs=${["콘 저항값", "DPI", "CBR", "N10"]} .active=${active}></tab-row>
      <depth-chart></depth-chart>
      <bottom-nav .active=${2}></bottom-nav>
    </section>`;
  }

  private device() {
    return html`<li>홍길동의 test<br />A0:AB:CD:EF:12:34</li>`;
  }

  render() {
    return html`
      <h1>사용자 화면</h1>
      <main class="columns">
        <div class="column">
          <section class="card">
            <header class="home-bar">
              <svg class="logo" viewBox="0 0 19 19" aria-hidden="true">
                <rect width="19" height="19" rx="7" fill="#00c3ff" />
                <path d="M9.500 6v9M9.500 12l-4 4M9.500 12l4 4M5 15.500h9" fill="none" stroke="#6f8f9c" />
                <path d="M7.500 2.500h3v3.500h-3z" fill="#b9a9a4" />
              </svg>
              ${bluetooth(12, 19)}
            </header>
            <div class="projects">
              <div class="banner">${bluetooth(10, 14)}<span>장치에 연결되지 않았습니다.</span></div>
              <ul class="list">
                <li class="project">
                  <div><h3>[제목] test</h3><p>[2023-10-30 14:00:52] 작성</p></div>
                  <button aria-label="삭제"><svg width="14" height="14" viewBox="0 0 14 14" stroke="#000" stroke-width="2" aria-hidden="true"><path d="m1 1 12 12M13 1 1 13" /></svg></button>
                </li>
              </ul>
              <button class="teal-button add">${icon(ADD_BOX, 22)}<span>프로젝트 추가</span></button>
            </div>
          </section>
          ${this.mapCard("park")}
          <section class="card">
            <screen-header heading="프로젝트 상세"></screen-header>
            <tab-row .tabs=${["데이터", "차트"]} .active=${0}></tab-row>
            <table>
              <colgroup><col class="c1" /><col class="c2" /><col /></colgroup>
              <thead><tr><th>타격수</th><th>관입량</th><th>누적 관입량</th></tr></thead>
              <tbody>${ROWS.map((r) => html`<tr>${r.map((c) => html`<td>${c}</td>`)}</tr>`)}</tbody>
            </table>
            <div class="actions">
              <button class="teal-button">기록하기</button>
              <button class="teal-button gray">레이저 센서 동작</button>
            </div>
            <bottom-nav .active=${1}></bottom-nav>
          </section>
          ${this.resultCard(0)}
        </div>

        <div class="column">
          <section class="card">
            <screen-header heading="동적콘관입시험"></screen-header>
            <div class="test">
              <label class="label" for="title">제목</label>
              <input class="box" id="title" .value=${"test"} />
              <label class="label" for="memo">메모</label>
              <textarea class="box" id="memo" .value=${"test"}></textarea>
              <button class="teal-button save">저장</button>
              <h3>현장 테스트 내역</h3>
              <p>등록된 테스트가 없습니다.</p>
              <button class="fab" aria-label="추가"><svg width="14" height="14" viewBox="0 0 14 14" stroke="#fff" stroke-width="2" aria-hidden="true"><path d="M7 0v14M0 7h14" /></svg></button>
            </div>
          </section>
          ${this.mapCard("river")}
          <section class="card">
            <screen-header end="none"></screen-header>
            <h3 class="band">이전에 연결된 기기</h3>
            <ul class="devices known">${this.device()}</ul>
            <h3 class="band">사용할 수 있는 기기
              <svg width="8" height="12" viewBox="0 0 8 12" fill="none" stroke="#03dac6" stroke-width="2" aria-hidden="true"><path d="M7 1Q6.500 8 .5 10.500" /></svg>
            </h3>
            <ul class="devices found">${[1, 2, 3, 4, 5].map(() => this.device())}</ul>
            <button class="teal-button wide scan">장치 검색</button>
          </section>
          ${this.resultCard(1)}
        </div>

        <div class="column">
          <section class="card form">
            <screen-header heading="프로젝트 상세"></screen-header>
            <project-form></project-form>
          </section>
          <section class="card form with-nav">
            <screen-header heading="프로젝트 상세"></screen-header>
            <project-form .values=${FILLED}></project-form>
            <bottom-nav .active=${0}></bottom-nav>
          </section>
          <section class="card">
            <screen-header heading="프로젝트 상세"></screen-header>
            <tab-row .tabs=${["데이터", "차트"]} .active=${1}></tab-row>
            <depth-chart></depth-chart>
            <bottom-nav .active=${1}></bottom-nav>
          </section>
        </div>
      </main>`;
  }
}
